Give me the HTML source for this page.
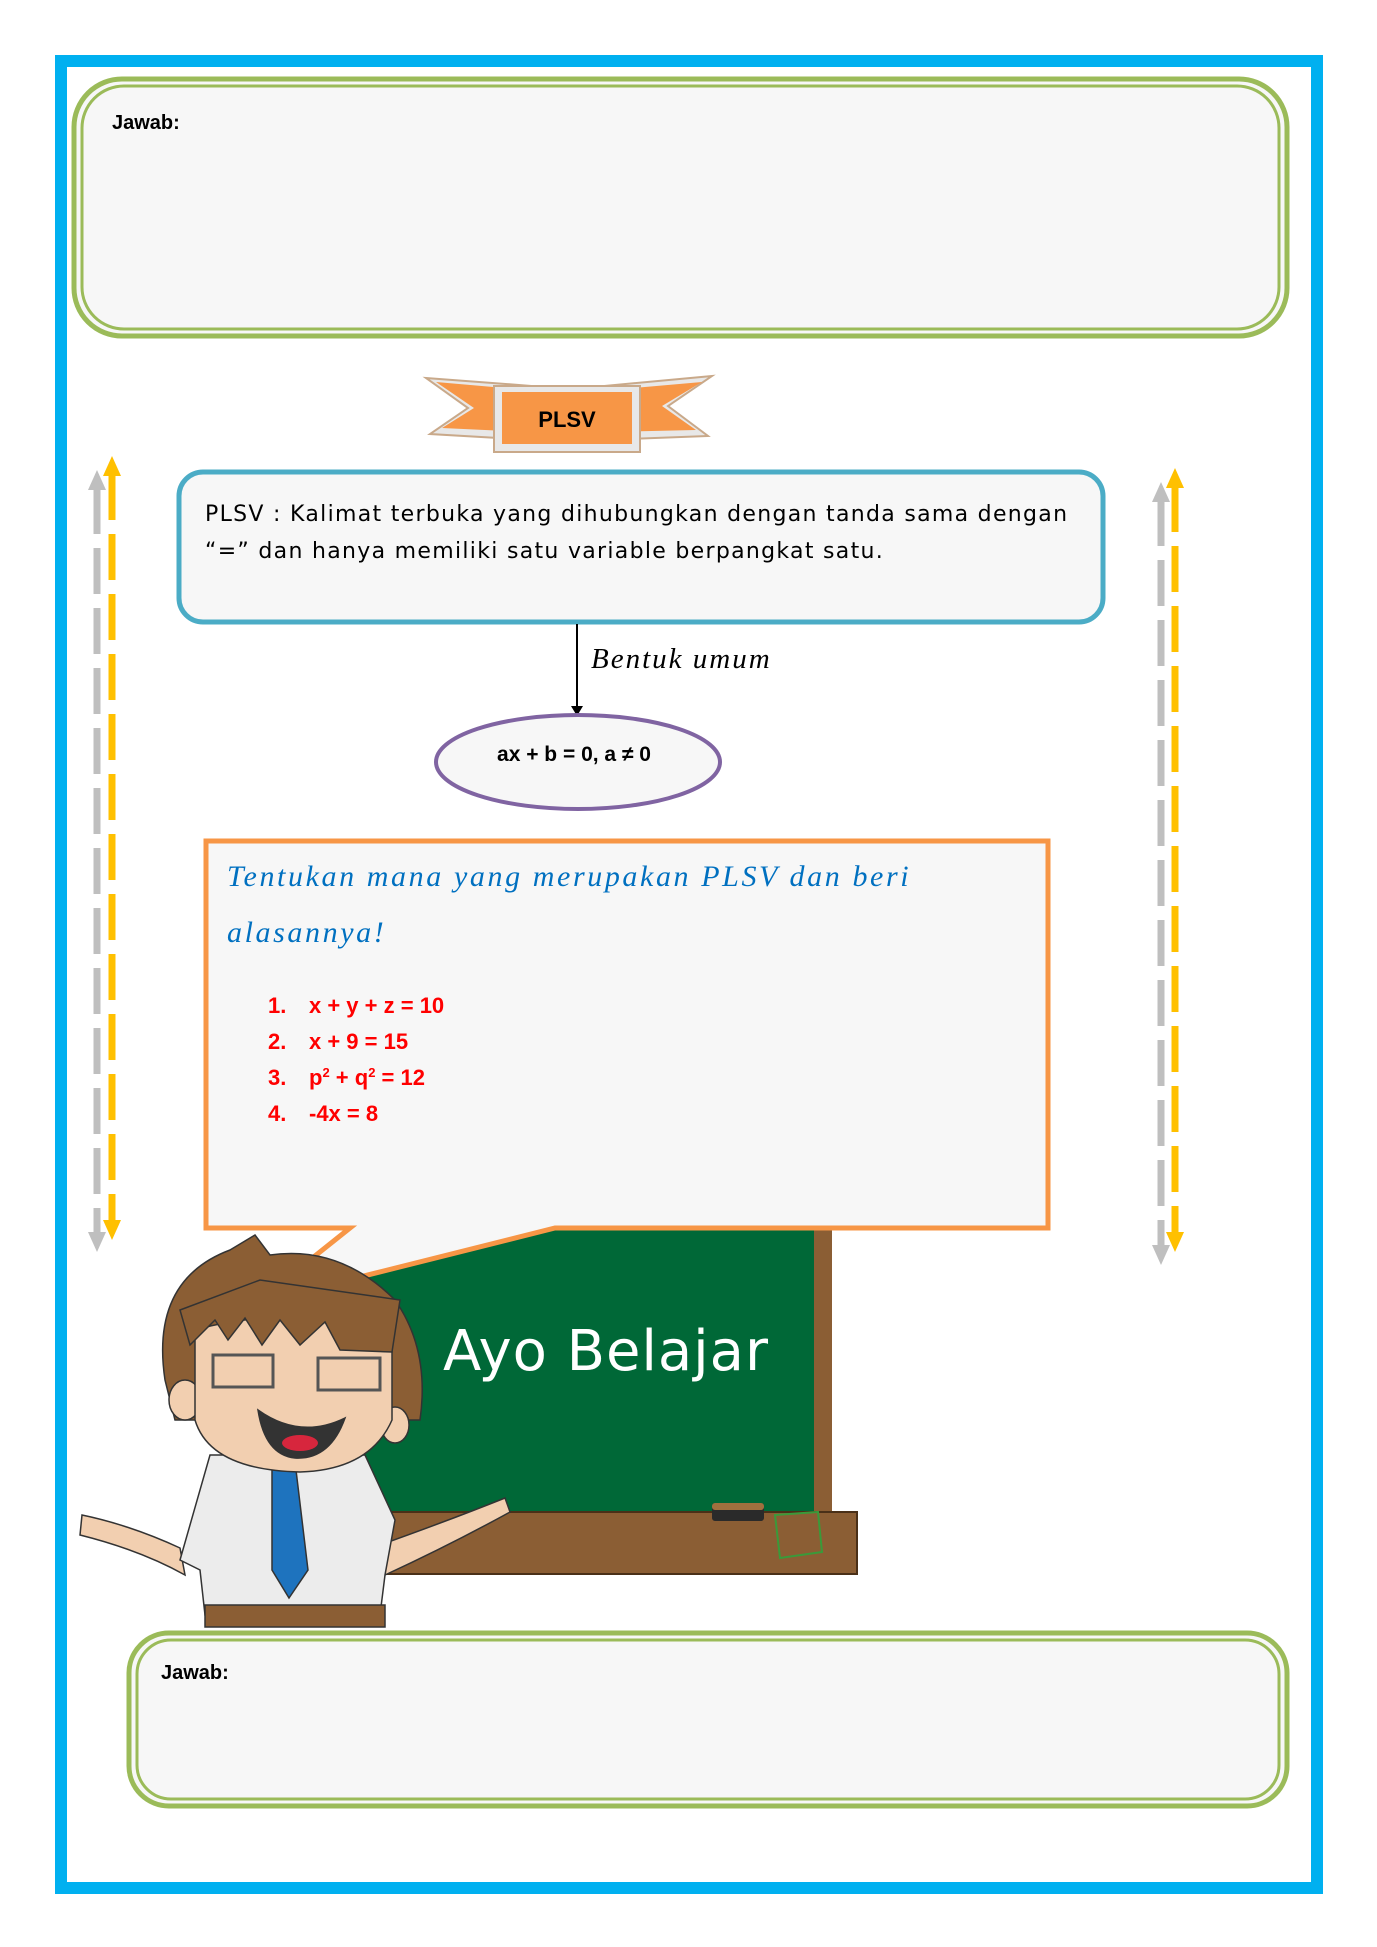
<!DOCTYPE html>
<html><head><meta charset="utf-8"><style>
html,body{margin:0;padding:0;background:#fff;}
svg{display:block;}
</style></head><body>
<svg width="1377" height="1947" viewBox="0 0 1377 1947" xmlns="http://www.w3.org/2000/svg">
<rect width="1377" height="1947" fill="#fff"/>
<rect x="61" y="61" width="1256" height="1827" fill="none" stroke="#00b0f0" stroke-width="12"/>
<rect x="74" y="79" width="1213" height="257" rx="48" fill="#f7f7f7" stroke="#9bbb59" stroke-width="5"/>
<rect x="82" y="86" width="1197" height="243" rx="42" fill="none" stroke="#9bbb59" stroke-width="3"/>
<text x="112" y="129" font-family="Liberation Sans, sans-serif" font-weight="bold" font-size="20" fill="#000">Jawab:</text>
<g>
<polygon points="426,378 532,386 532,440 430,434 468,408" fill="#e8e8e8" stroke="#c9a98a" stroke-width="2"/>
<polygon points="436,382 528,390 528,432 442,428 474,408" fill="#f79646"/>
<polygon points="712,376 604,386 604,440 708,436 668,406" fill="#e8e8e8" stroke="#c9a98a" stroke-width="2"/>
<polygon points="702,382 610,390 610,432 696,430 662,406" fill="#f79646"/>
<rect x="494" y="386" width="146" height="66" fill="#e8e8e8" stroke="#c9a98a" stroke-width="2"/>
<rect x="502" y="392" width="130" height="52" fill="#f79646"/>
<text x="567" y="427" text-anchor="middle" font-family="Liberation Sans, sans-serif" font-weight="bold" font-size="22" fill="#000">PLSV</text>
</g>
<rect x="179" y="472" width="924" height="150" rx="24" fill="#f7f7f7" stroke="#4bacc6" stroke-width="5"/>
<text font-family="DejaVu Sans, sans-serif" font-size="22" fill="#000" letter-spacing="1.3">
<tspan x="205" y="521">PLSV : Kalimat terbuka yang dihubungkan dengan tanda sama dengan</tspan>
<tspan x="205" y="558">“=” dan hanya memiliki satu variable berpangkat satu.</tspan>
</text>
<line x1="577" y1="624" x2="577" y2="708" stroke="#000" stroke-width="2"/>
<polygon points="571,706 583,706 577,716" fill="#000"/>
<text x="591" y="668" font-family="Liberation Serif, serif" font-style="italic" font-size="29" letter-spacing="2" fill="#000">Bentuk umum</text>
<ellipse cx="578" cy="762" rx="142" ry="47" fill="#f7f7f7" stroke="#8064a2" stroke-width="4"/>
<text x="574" y="761" text-anchor="middle" font-family="Liberation Sans, sans-serif" font-weight="bold" font-size="21" fill="#000">ax + b = 0, a ≠ 0</text>
<line x1="97" y1="488" x2="97" y2="1232" stroke="#bfbfbf" stroke-width="7" stroke-dasharray="46,14"/>
<polygon points="88,490 106,490 97,470" fill="#bfbfbf"/>
<polygon points="88,1232 106,1232 97,1252" fill="#bfbfbf"/>
<line x1="112" y1="474" x2="112" y2="1220" stroke="#ffc000" stroke-width="7" stroke-dasharray="46,14"/>
<polygon points="103,476 121,476 112,456" fill="#ffc000"/>
<polygon points="103,1220 121,1220 112,1240" fill="#ffc000"/>
<line x1="1161" y1="500" x2="1161" y2="1245" stroke="#bfbfbf" stroke-width="7" stroke-dasharray="46,14"/>
<polygon points="1152,502 1170,502 1161,482" fill="#bfbfbf"/>
<polygon points="1152,1245 1170,1245 1161,1265" fill="#bfbfbf"/>
<line x1="1175" y1="486" x2="1175" y2="1232" stroke="#ffc000" stroke-width="7" stroke-dasharray="46,14"/>
<polygon points="1166,488 1184,488 1175,468" fill="#ffc000"/>
<polygon points="1166,1232 1184,1232 1175,1252" fill="#ffc000"/>
<rect x="352" y="1222" width="480" height="300" fill="#8b5e34"/>
<rect x="362" y="1222" width="452" height="290" fill="#006837"/>
<rect x="352" y="1512" width="505" height="62" fill="#8b5e34" stroke="#4a3018" stroke-width="2"/>
<rect x="712" y="1503" width="52" height="18" rx="3" fill="#2a2a2a"/>
<rect x="712" y="1503" width="52" height="7" rx="3" fill="#a0703e"/>
<polygon points="775,1515 818,1512 822,1552 780,1558" fill="none" stroke="#3a9a3a" stroke-width="2"/>
<text x="443" y="1370" font-family="DejaVu Sans, sans-serif" font-size="56" fill="#fff" textLength="325">Ayo Belajar</text>
<path d="M206,841 L1048,841 L1048,1228 L555,1228 L256,1303 L350,1228 L206,1228 Z" fill="#f7f7f7" stroke="#f79646" stroke-width="5"/>
<text font-family="Liberation Serif, serif" font-style="italic" font-size="30" fill="#0070c0" letter-spacing="2.6">
<tspan x="227" y="886">Tentukan mana yang merupakan PLSV dan beri</tspan>
<tspan x="227" y="942">alasannya!</tspan>
</text>
<g font-family="Liberation Sans, sans-serif" font-weight="bold" font-size="22" fill="#ff0000">
<text x="268" y="1013">1.</text><text x="309" y="1013">x + y + z = 10</text>
<text x="268" y="1049">2.</text><text x="309" y="1049">x + 9 = 15</text>
<text x="268" y="1085">3.</text><text x="309" y="1085">p<tspan font-size="13" dy="-8">2</tspan><tspan dy="8"> + q</tspan><tspan font-size="13" dy="-8">2</tspan><tspan dy="8"> = 12</tspan></text>
<text x="268" y="1121">4.</text><text x="309" y="1121">-4x = 8</text>
</g>
<g stroke="#333" stroke-width="1.5">
<path d="M180,1548 Q130,1525 82,1515 L80,1535 Q140,1550 185,1575 Z" fill="#f2cfb0"/>
<path d="M380,1545 Q450,1520 505,1498 L510,1512 Q450,1545 385,1575 Z" fill="#f2cfb0"/>
<path d="M210,1455 L365,1455 L395,1520 L385,1575 L380,1615 L205,1615 L200,1570 L180,1560 Z" fill="#ececec"/>
<polygon points="272,1470 296,1470 308,1570 289,1598 272,1570" fill="#1e73be"/>
<rect x="205" y="1605" width="180" height="22" fill="#8b5e34"/>
<path d="M165,1380 Q150,1280 230,1250 L255,1235 L270,1255 Q340,1245 395,1300 Q430,1350 420,1420 L175,1420 Z" fill="#8b5e34"/>
<ellipse cx="185" cy="1400" rx="16" ry="20" fill="#f2cfb0"/>
<ellipse cx="395" cy="1425" rx="14" ry="18" fill="#f2cfb0"/>
<path d="M195,1330 Q300,1300 392,1345 L392,1420 Q370,1470 300,1472 Q210,1470 195,1420 Z" fill="#f2cfb0"/>
<path d="M190,1345 L215,1320 L228,1340 L245,1318 L262,1345 L280,1320 L300,1345 L325,1322 L340,1350 L392,1352 L400,1300 L260,1280 L180,1310 Z" fill="#8b5e34"/>
<rect x="213" y="1355" width="60" height="32" fill="none" stroke="#555" stroke-width="3"/>
<rect x="318" y="1358" width="62" height="32" fill="none" stroke="#555" stroke-width="3"/>
<path d="M258,1410 Q300,1440 345,1418 Q330,1460 295,1458 Q265,1455 258,1410 Z" fill="#333"/>
<ellipse cx="300" cy="1443" rx="18" ry="8" fill="#d7263d" stroke="none"/>
</g>
<rect x="129" y="1633" width="1158" height="173" rx="40" fill="#f7f7f7" stroke="#9bbb59" stroke-width="5"/>
<rect x="137" y="1640" width="1142" height="159" rx="34" fill="none" stroke="#9bbb59" stroke-width="3"/>
<text x="161" y="1679" font-family="Liberation Sans, sans-serif" font-weight="bold" font-size="20" fill="#000">Jawab:</text>
</svg>
</body></html>
